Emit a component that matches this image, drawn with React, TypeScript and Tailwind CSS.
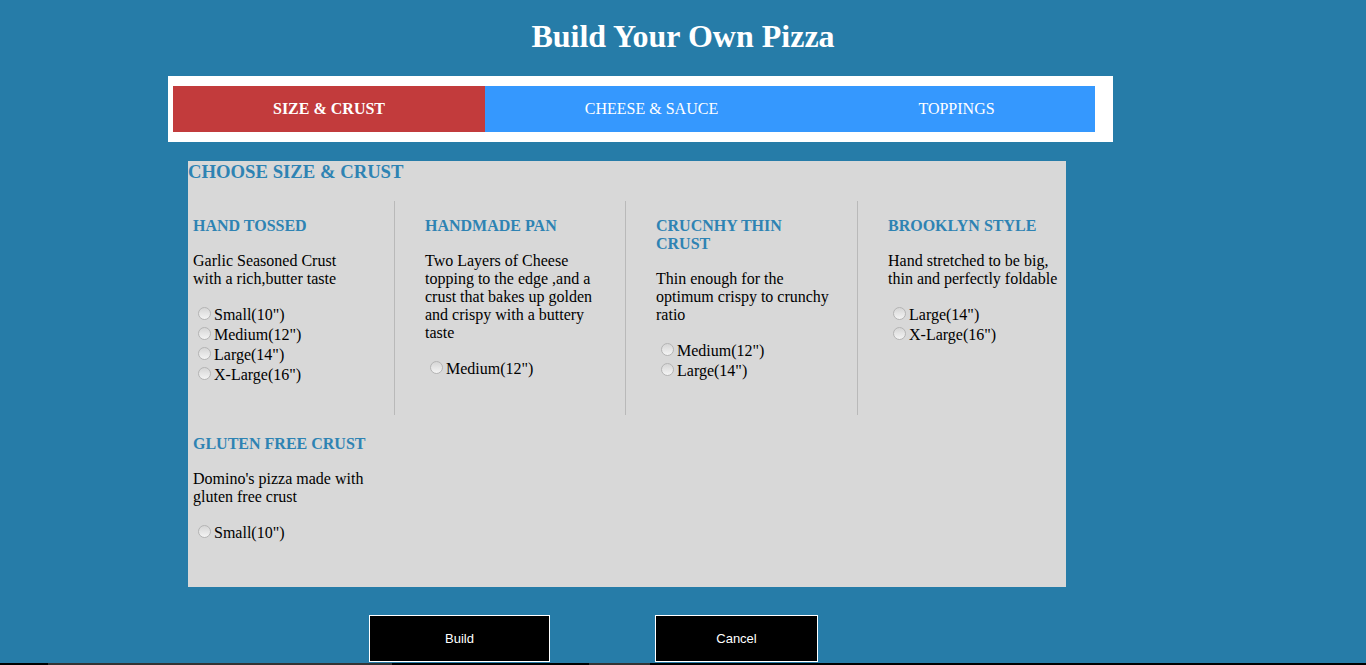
import React from "react";

type Crust = { title: string[]; desc: string; sizes: string[] };

const row1: Crust[] = [
  { title: ["HAND TOSSED"], desc: "Garlic Seasoned Crust with a rich,butter taste", sizes: ['Small(10")', 'Medium(12")', 'Large(14")', 'X-Large(16")'] },
  { title: ["HANDMADE PAN"], desc: "Two Layers of Cheese topping to the edge ,and a crust that bakes up golden and crispy with a buttery taste", sizes: ['Medium(12")'] },
  { title: ["CRUCNHY THIN CRUST"], desc: "Thin enough for the optimum crispy to crunchy ratio", sizes: ['Medium(12")', 'Large(14")'] },
  { title: ["BROOKLYN STYLE"], desc: "Hand stretched to be big, thin and perfectly foldable", sizes: ['Large(14")', 'X-Large(16")'] },
];

const gluten: Crust = { title: ["GLUTEN FREE CRUST"], desc: "Domino's pizza made with gluten free crust", sizes: ['Small(10")'] };

function Radio({ label, name }: { label: string; name: string }) {
  return (
    <label className="flex items-center h-[20px] text-[16px] leading-[20px] text-black">
      <input
        type="radio"
        name={name}
        className="appearance-none ml-[5px] mr-[3px] mt-[-1px] w-[13px] h-[13px] rounded-full border border-[#b4b4b4] bg-gradient-to-b from-[#d6d6d6] to-[#f4f4f4]"
      />
      <span className="pt-[1px]">{label}</span>
    </label>
  );
}

function CrustBlock({ c, name }: { c: Crust; name: string }) {
  return (
    <div className="w-[175px]">
      <h4 className="mt-[16px] mb-[17px] text-[16px] leading-[18px] font-bold text-[#2e83b3]">{c.title.join(" ")}</h4>
      <p className="mb-[16px] text-[16px] leading-[18px] text-black">{c.desc}</p>
      <div>
        {c.sizes.map((s) => (
          <Radio key={s} label={s} name={name} />
        ))}
      </div>
    </div>
  );
}

export default function App() {
  return (
    <div
      className="min-h-[665px] bg-[#267ca8] relative overflow-hidden"
      style={{ fontFamily: '"Liberation Serif", "Times New Roman", serif' }}
    >
      <h1 className="pt-[18px] mb-[21px] text-center text-[32px] leading-[37px] font-bold text-white">
        Build Your Own Pizza
      </h1>

      <div className="ml-[168px] w-[945px] h-[66px] bg-white pl-[5px] pr-[18px] py-[10px]">
        <div className="flex h-[46px] text-white text-[16px]">
          <div className="w-[312px] bg-[#c23b3c] flex items-center justify-center font-bold">SIZE &amp; CRUST</div>
          <div className="w-[333px] bg-[#3598fe] flex items-center justify-center">CHEESE &amp; SAUCE</div>
          <div className="w-[277px] bg-[#3598fe] flex items-center justify-center">TOPPINGS</div>
        </div>
      </div>

      <div className="ml-[188px] mt-[19px] w-[878px] h-[426px] bg-[#d8d8d8]">
        <h3 className="text-[18.7px] leading-[22px] font-bold text-[#2e83b3]">CHOOSE SIZE &amp; CRUST</h3>
        <div className="mt-[18px] flex h-[214px]">
          <div className="w-[207px] pl-[5px] border-r border-[#b9b9b9]">
            <CrustBlock c={row1[0]} name="c0" />
          </div>
          <div className="w-[231px] pl-[30px] border-r border-[#b9b9b9]">
            <CrustBlock c={row1[1]} name="c1" />
          </div>
          <div className="w-[232px] pl-[30px] border-r border-[#b9b9b9]">
            <CrustBlock c={row1[2]} name="c2" />
          </div>
          <div className="flex-1 pl-[30px]">
            <CrustBlock c={row1[3]} name="c3" />
          </div>
        </div>
        <div className="pt-[4px] pl-[5px]">
          <CrustBlock c={gluten} name="c4" />
        </div>
      </div>

      <div
        className="mt-[28px] ml-[369px] flex gap-[105px]"
        style={{ fontFamily: '"Liberation Sans", Arial, sans-serif' }}
      >
        <button className="w-[181px] h-[47px] bg-black border border-white text-white text-[13px]">Build</button>
        <button className="w-[163px] h-[47px] bg-black border border-white text-white text-[13px]">Cancel</button>
      </div>

      <div className="absolute left-0 right-0 bottom-0 h-[2px] bg-black flex">
        <div className="ml-[48px] w-[344px] bg-[#333333]" />
        <div className="ml-[197px] w-[61px] bg-[#333333]" />
      </div>
    </div>
  );
}
